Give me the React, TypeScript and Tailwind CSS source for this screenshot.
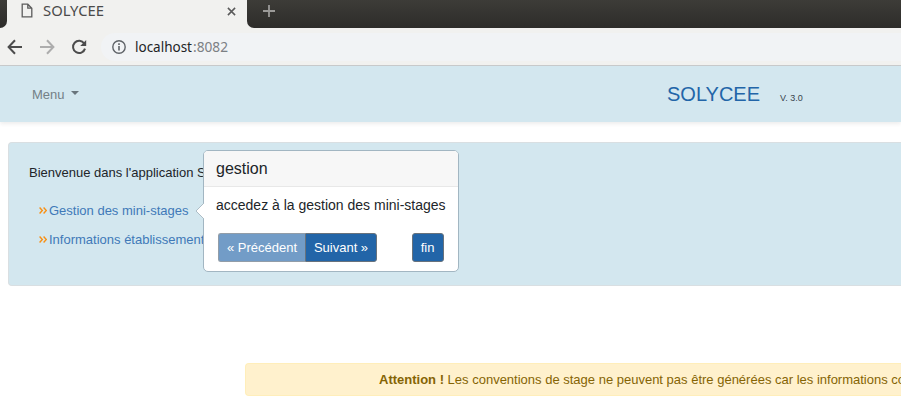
import React from "react";

function BrowserChrome() {
  return (
    <header className="h-[66px] shrink-0 border-b border-[#c9cbcc] bg-[#f1f1ef] font-['Noto_Sans',sans-serif]">
      <div className="flex h-7">
        <div className="w-[7px] rounded-br-[7px] bg-linear-to-b from-[#3d3c38] to-[#2d2c2a]" />
        <div className="flex w-[240px] items-start pl-[14px]">
          <svg className="mt-[3px] h-[15px] w-[12px] shrink-0" viewBox="0 0 12 15" fill="none" stroke="#5c5c5c" strokeWidth="1.3">
            <path d="M1.2 1.2h5.6l4 4v8.6H1.2zM6.8 1.2v4h4" />
          </svg>
          <svg className="ml-[10px] h-[22px] w-[62px] shrink-0" viewBox="0 0 62 22">
            <text x="0" y="16" textLength="61" lengthAdjust="spacingAndGlyphs" fontSize="14.6" fill="#4a4a4a">SOLYCEE</text>
          </svg>
          <svg className="mt-[7px] ml-[122px] h-[9px] w-[9px] shrink-0" viewBox="0 0 9 9" stroke="#5a5a5a" strokeWidth="1.5">
            <path d="M.9.9l7.2 7.2M8.1.9L.9 8.1" />
          </svg>
        </div>
        <div className="flex-1 rounded-bl-[7px] bg-linear-to-b from-[#3d3c38] to-[#2d2c2a] pt-[5px] pl-4">
          <svg className="h-3 w-3" viewBox="0 0 12 12" stroke="#9b9a98" strokeWidth="1.8">
            <path d="M6 0v12M0 6h12" />
          </svg>
        </div>
      </div>
      <div className="flex h-[37px] items-center">
        <svg className="ml-[7px] h-4 w-4" viewBox="0 0 16 16" fill="none" stroke="#4c4c4c" strokeWidth="2">
          <path d="M15 8H2M8 1.3L1.6 8L8 14.7" />
        </svg>
        <svg className="ml-4 h-4 w-4" viewBox="0 0 16 16" fill="none" stroke="#adadad" strokeWidth="2">
          <path d="M1 8h13M8 1.3L14.4 8L8 14.7" />
        </svg>
        <svg className="ml-4 h-4 w-4" viewBox="0 0 16 16" fill="none" stroke="#4c4c4c" strokeWidth="2">
          <path d="M13.2 4.5A6.1 6.1 0 1 0 14 9.6" />
          <path d="M15.2 1v6H9.2z" fill="#4c4c4c" stroke="none" />
        </svg>
        <div className="ml-[14px] flex h-7 flex-1 items-center rounded-l-full bg-[#f1f3f5] pl-[11px]">
          <svg className="h-[14px] w-[14px]" viewBox="0 0 14 14" fill="none" stroke="#5f6368" strokeWidth="1.4">
            <circle cx="7" cy="7" r="6.2" />
            <path d="M7 6v4.5M7 3.3v1.6" strokeWidth="1.6" />
          </svg>
          <svg className="ml-[9px] h-6 w-[100px]" viewBox="0 0 100 24">
            <text x="0" y="17" textLength="57" lengthAdjust="spacingAndGlyphs" fontSize="15" fill="#222426">localhost</text>
            <text x="58" y="17" textLength="35" lengthAdjust="spacingAndGlyphs" fontSize="15" fill="#7c8084">:8082</text>
          </svg>
        </div>
      </div>
    </header>
  );
}

function Navbar() {
  return (
    <nav className="flex h-14 shrink-0 items-center bg-[#d3e7ef] shadow-[0_2px_4px_rgba(0,0,0,0.075)]">
      <span className="mt-[2px] ml-8 w-[32px] text-[13px] text-[#748086]">Menu</span>
      <span className="mt-[-2px] ml-[7px] border-x-4 border-t-4 border-x-transparent border-t-[#69757c]" />
      <span className="ml-[588px] w-[93px] text-[20px] leading-6 text-[#2265a8]">SOLYCEE</span>
      <span className="mt-[9px] ml-5 text-[9px] text-[#39444c]">V. 3.0</span>
    </nav>
  );
}

function MenuLink({ children }: { children: React.ReactNode }) {
  return (
    <a className="flex h-[29px] items-center whitespace-nowrap text-[13px] text-[#4079b8]">
      <svg className="mr-[2px] h-[7px] w-2" viewBox="0 0 8 7" fill="none" stroke="#f98f12" strokeWidth="1.4">
        <path d="M.6.6L3.3 3.5L.6 6.4M4.6.6L7.3 3.5L4.6 6.4" />
      </svg>
      {children}
    </a>
  );
}

function TourPopover() {
  return (
    <div className="absolute top-[7px] left-[194px] h-[122px] w-[256px] rounded-[5px] border border-[#a2b6c2] bg-white">
      <svg className="absolute top-[51px] -left-[9px] h-[18px] w-[10px]" viewBox="0 0 10 18">
        <path d="M10 0L.8 9L10 18z" fill="white" />
        <path d="M9 1L1 9L9 17" fill="none" stroke="#adbdc6" />
      </svg>
      <h3 className="h-9 rounded-t-[4px] border-b border-[#e8e8e8] bg-[#f7f7f7] pl-3 text-[16px] leading-[35px] text-[#212529]">gestion</h3>
      <p className="mt-[8px] ml-3 text-[14px] leading-5 whitespace-nowrap text-[#212529]">accedez à la gestion des mini-stages</p>
      <div className="mt-[18px] ml-[14px] flex text-[13px] leading-[27px] whitespace-nowrap text-white">
        <button className="h-[29px] w-[87px] rounded-l-[3px] border border-r-0 border-[#929da8] bg-[#729cc7]">« Précédent</button>
        <button className="h-[29px] w-[72px] rounded-r-[3px] border border-[#68727c] bg-[#2265a8]">Suivant »</button>
        <button className="ml-[35px] h-[29px] w-8 rounded-[3px] border border-[#68727c] bg-[#2265a8] pr-px">fin</button>
      </div>
    </div>
  );
}

export default function App() {
  return (
    <div className="flex h-[416px] w-[901px] flex-col overflow-hidden bg-white font-['Liberation_Sans',Arial,sans-serif]">
      <BrowserChrome />
      <Navbar />
      <main className="pt-5">
        <section className="relative ml-2 h-[144px] rounded-l-[4px] border border-r-0 border-[#d9dfe2] bg-[#d3e7ef] pt-5 pl-5">
          <p className="text-[13px] leading-5 text-[#212529]">Bienvenue dans l'application S</p>
          <div className="mt-[13px] ml-[10px]">
            <MenuLink>Gestion des mini-stages</MenuLink>
            <MenuLink>Informations établissement</MenuLink>
          </div>
          <TourPopover />
        </section>
        <div className="mt-[77px] ml-[245px] h-[33px] overflow-hidden rounded-l-[4px] border border-r-0 border-[#ffeeba] bg-[#fff1cd] pl-[133px] text-[13px] leading-[31px] whitespace-nowrap text-[#856404]">
          <strong>Attention !</strong> Les conventions de stage ne peuvent pas être générées car les informations co
        </div>
      </main>
    </div>
  );
}
